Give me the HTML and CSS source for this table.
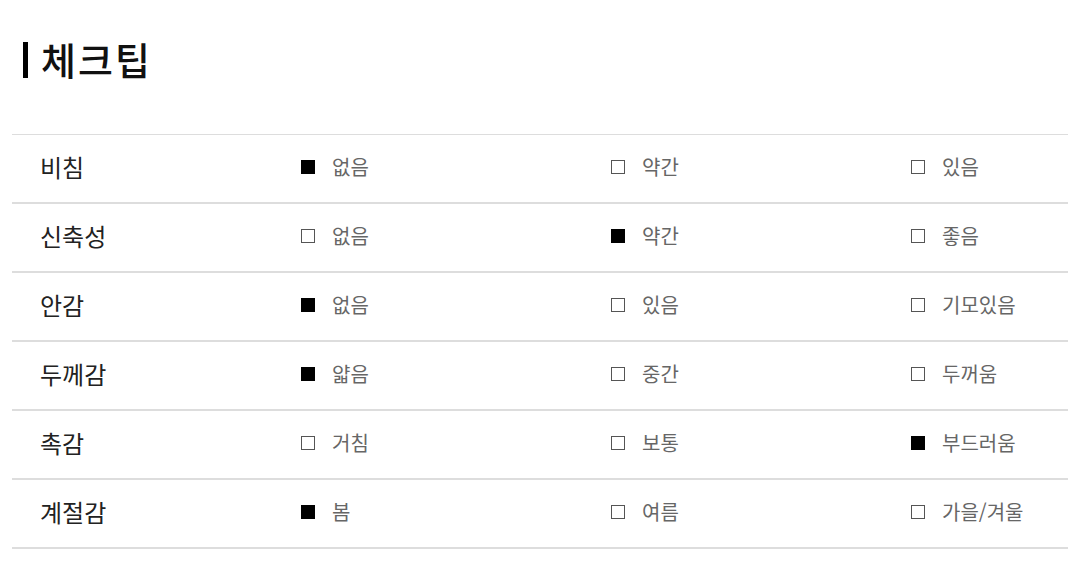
FILE: index.html
```html
<!DOCTYPE html>
<html lang="ko">
<head>
<meta charset="utf-8">
<link rel="stylesheet" href="styles.css">
</head>
<body>
<div class="page">
  <h2 class="title"><span class="bar"></span>체크팁</h2>
  <div class="table">
    <div class="row">
      <div class="label">비침</div>
      <div class="opt"><span class="box on"></span>없음</div>
      <div class="opt"><span class="box"></span>약간</div>
      <div class="opt"><span class="box"></span>있음</div>
    </div>
    <div class="row">
      <div class="label">신축성</div>
      <div class="opt"><span class="box"></span>없음</div>
      <div class="opt"><span class="box on"></span>약간</div>
      <div class="opt"><span class="box"></span>좋음</div>
    </div>
    <div class="row">
      <div class="label">안감</div>
      <div class="opt"><span class="box on"></span>없음</div>
      <div class="opt"><span class="box"></span>있음</div>
      <div class="opt"><span class="box"></span>기모있음</div>
    </div>
    <div class="row">
      <div class="label">두께감</div>
      <div class="opt"><span class="box on"></span>얇음</div>
      <div class="opt"><span class="box"></span>중간</div>
      <div class="opt"><span class="box"></span>두꺼움</div>
    </div>
    <div class="row">
      <div class="label">촉감</div>
      <div class="opt"><span class="box"></span>거침</div>
      <div class="opt"><span class="box"></span>보통</div>
      <div class="opt"><span class="box on"></span>부드러움</div>
    </div>
    <div class="row">
      <div class="label">계절감</div>
      <div class="opt"><span class="box on"></span>봄</div>
      <div class="opt"><span class="box"></span>여름</div>
      <div class="opt"><span class="box"></span>가을/겨울</div>
    </div>
  </div>
</div>
</body>
</html>
```
FILE: styles.css
```css
html, body {
  margin: 0;
  padding: 0;
  background: #fff;
}
body {
  font-family: "Noto Sans CJK KR", "Noto Sans", sans-serif;
  color: #222;
}
.page {
  padding: 0 12px;
}
.title {
  margin: 0;
  height: 134px;
  box-sizing: border-box;
  padding-top: 32px;
  padding-left: 11px;
  display: flex;
  align-items: flex-start;
  font-size: 38px;
  font-weight: 500;
  line-height: 54px;
  letter-spacing: 2px;
  color: #111;
}
.bar {
  display: inline-block;
  width: 5px;
  height: 36px;
  background: #000;
  margin-top: 10px;
  margin-right: 13px;
}
.table {
  border-top: 1.5px solid #ddd;
}
.row {
  display: grid;
  grid-template-columns: 289px 310px 300px 1fr;
  align-items: center;
  height: 67px;
  border-bottom: 2px solid #ddd;
}
.label {
  padding-left: 28px;
  font-size: 24px;
  font-weight: 400;
  color: #222;
  line-height: 1;
  padding-bottom: 4px;
}
.opt {
  display: flex;
  align-items: center;
  font-size: 20px;
  color: #666;
  line-height: 1;
  padding-bottom: 4px;
}
.box {
  width: 12px;
  height: 12px;
  border: 1.5px solid #555;
  margin-right: 17px;
  flex: none;
}
.box.on {
  background: #000;
  border-color: #000;
}
```
